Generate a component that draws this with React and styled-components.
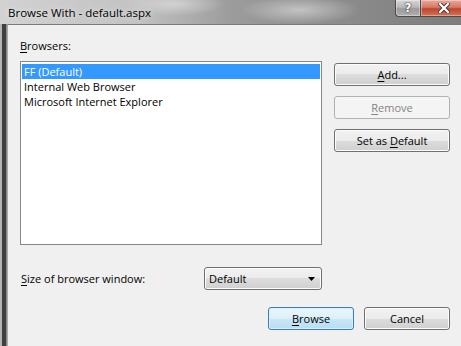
import React from 'react';
import styled, { createGlobalStyle } from 'styled-components';

const GlobalStyle = createGlobalStyle`
  html, body {
    margin: 0;
    padding: 0;
  }
  body {
    width: 461px;
    height: 346px;
    overflow: hidden;
    background: #f0f0f0;
    font-family: "Open Sans", "Noto Sans", sans-serif;
    font-size: 11px;
    color: #000;
  }
`;

const Window = styled.div`
  width: 461px;
  height: 346px;
  display: flex;
  flex-direction: column;
  overflow: hidden;
`;

const TitleBar = styled.div`
  height: 24px;
  flex: none;
  display: flex;
  align-items: flex-start;
  background:
    radial-gradient(ellipse 60px 14px at 300px 10px, rgba(235,235,235,0.55), rgba(235,235,235,0)),
    radial-gradient(ellipse 50px 12px at 175px 4px, rgba(240,240,240,0.5), rgba(240,240,240,0)),
    linear-gradient(to right, #d2d2d2 0%, #c2c2c2 30%, #9c9c9c 50%, #8e8e8e 70%, #7d7d7d 100%);
`;

const Title = styled.div`
  flex: 1;
  padding: 5px 0 0 8px;
  font-size: 11.5px;
  line-height: 15px;
  text-shadow: 0 0 6px rgba(255,255,255,0.8);
`;

const CaptionButtons = styled.div`
  display: flex;
  margin-right: -6px;
`;

const CaptionButton = styled.div`
  width: ${p => p.$w}px;
  height: 17px;
  box-sizing: border-box;
  display: flex;
  align-items: center;
  justify-content: center;
  border: 1px solid #4a4a4a;
  border-top: none;
  border-left-width: ${p => (p.$first ? 1 : 0)}px;
  border-radius: ${p => (p.$first ? '0 0 0 4px' : '0')};
  background: ${p =>
    p.$close
      ? 'linear-gradient(#e9a99c 0%, #d47a68 45%, #c0452d 55%, #d5735a 100%)'
      : 'linear-gradient(#d8d8d8 0%, #b8b8b8 45%, #9a9a9a 55%, #b0b0b0 100%)'};
  box-shadow: inset 0 0 0 1px rgba(255,255,255,0.35);
  color: #fff;
  font-family: "DejaVu Sans", sans-serif;
  font-weight: bold;
  font-size: 12px;
  line-height: 14px;
  text-shadow: 0 0 2px #333, 0 0 1px #222;
`;

const Body = styled.div`
  flex: 1;
  display: flex;
`;

const Frame = styled.div`
  width: 7px;
  flex: none;
  background: linear-gradient(to right, #b4b4b4 0 2px, #3f3f3f 2px 6px, #8a8a8a 6px 7px);
`;

const Client = styled.div`
  flex: 1;
  background: #f0f0f0;
  border-top: 1px solid #7a7a7a;
  border-left: 1px solid #a9a9a9;
  padding: 13px 0 0 12px;
  display: flex;
  flex-direction: column;
`;

const Label = styled.div`
  line-height: 15px;
  padding-left: ${p => p.$indent || 0}px;
`;

const Key = styled.span`
  text-decoration: underline;
  text-underline-offset: 2px;
`;

const MainRow = styled.div`
  display: flex;
  gap: 12px;
  margin-top: 8px;
`;

const ListBox = styled.div`
  width: 302px;
  height: 184px;
  box-sizing: border-box;
  border: 1px solid #828790;
  background: #fff;
  padding: 2px 1px;
`;

const ListItem = styled.div`
  height: 15px;
  line-height: 15px;
  padding-left: 2px;
  background: ${p => (p.$selected ? '#3399ff' : 'transparent')};
  color: ${p => (p.$selected ? '#fff' : '#000')};
  white-space: nowrap;
`;

const SideButtons = styled.div`
  display: flex;
  flex-direction: column;
  gap: 10px;
  padding-top: 2px;
`;

const Button = styled.div`
  width: ${p => p.$w}px;
  height: 23px;
  box-sizing: border-box;
  display: flex;
  align-items: center;
  justify-content: center;
  border-radius: 3px;
  border: 1px solid ${p => (p.$disabled ? '#adb2b5' : p.$default ? '#3c7fb1' : '#707070')};
  color: ${p => (p.$disabled ? '#838383' : '#000')};
  background: ${p =>
    p.$disabled
      ? '#f4f4f4'
      : p.$default
      ? 'linear-gradient(#eaf6fd 0%, #dcf0fb 50%, #c8e6f7 50%, #b9def3 100%)'
      : 'linear-gradient(#f2f2f2 0%, #ebebeb 50%, #dddddd 50%, #cfcfcf 100%)'};
  box-shadow: inset 0 0 0 1px ${p => (p.$disabled ? '#f4f4f4' : p.$default ? '#d8eefb' : '#fcfcfc')};
`;

const ButtonText = styled.span`
  line-height: 15px;
  white-space: nowrap;
`;

const SizeRow = styled.div`
  display: flex;
  align-items: center;
  margin-top: 22px;
`;

const SizeLabel = styled(Label)`
  width: 183px;
`;

const Select = styled.div`
  width: 118px;
  height: 23px;
  box-sizing: border-box;
  display: flex;
  align-items: center;
  justify-content: space-between;
  padding: 0 6px 0 4px;
  border: 1px solid #707070;
  border-radius: 3px;
  background: linear-gradient(#f2f2f2 0%, #ebebeb 50%, #dddddd 50%, #cfcfcf 100%);
  box-shadow: inset 0 0 0 1px #fcfcfc;
`;

const ActionRow = styled.div`
  display: flex;
  gap: 10px;
  justify-content: flex-end;
  padding-right: 11px;
  margin-top: 17px;
`;

export default function App() {
  return (
    <Window>
      <GlobalStyle />
      <TitleBar>
        <Title>Browse With - default.aspx</Title>
        <CaptionButtons>
          <CaptionButton $w={26} $first>?</CaptionButton>
          <CaptionButton $w={46} $close>
            <svg width="12" height="10" viewBox="0 0 12 10">
              <path d="M2 1 L10 9 M10 1 L2 9" stroke="#3a3a3a" strokeWidth="4" strokeLinecap="square" />
              <path d="M2 1 L10 9 M10 1 L2 9" stroke="#fff" strokeWidth="2.2" strokeLinecap="square" />
            </svg>
          </CaptionButton>
        </CaptionButtons>
      </TitleBar>
      <Body>
        <Frame />
        <Client>
          <Label><Key>B</Key>rowsers:</Label>
          <MainRow>
            <ListBox>
              <ListItem $selected>FF (Default)</ListItem>
              <ListItem>Internal Web Browser</ListItem>
              <ListItem>Microsoft Internet Explorer</ListItem>
            </ListBox>
            <SideButtons>
              <Button $w={116}><ButtonText><Key>A</Key>dd...</ButtonText></Button>
              <Button $w={116} $disabled><ButtonText><Key>R</Key>emove</ButtonText></Button>
              <Button $w={116}><ButtonText>Set as <Key>D</Key>efault</ButtonText></Button>
            </SideButtons>
          </MainRow>
          <SizeRow>
            <SizeLabel $indent={1}><Key>S</Key>ize of browser window:</SizeLabel>
            <Select>
              <ButtonText>Default</ButtonText>
              <svg width="7" height="4" viewBox="0 0 7 4">
                <path d="M0 0 H7 L3.5 4 Z" fill="#000" />
              </svg>
            </Select>
          </SizeRow>
          <ActionRow>
            <Button $w={86} $default><ButtonText><Key>B</Key>rowse</ButtonText></Button>
            <Button $w={86}><ButtonText>Cancel</ButtonText></Button>
          </ActionRow>
        </Client>
      </Body>
    </Window>
  );
}
